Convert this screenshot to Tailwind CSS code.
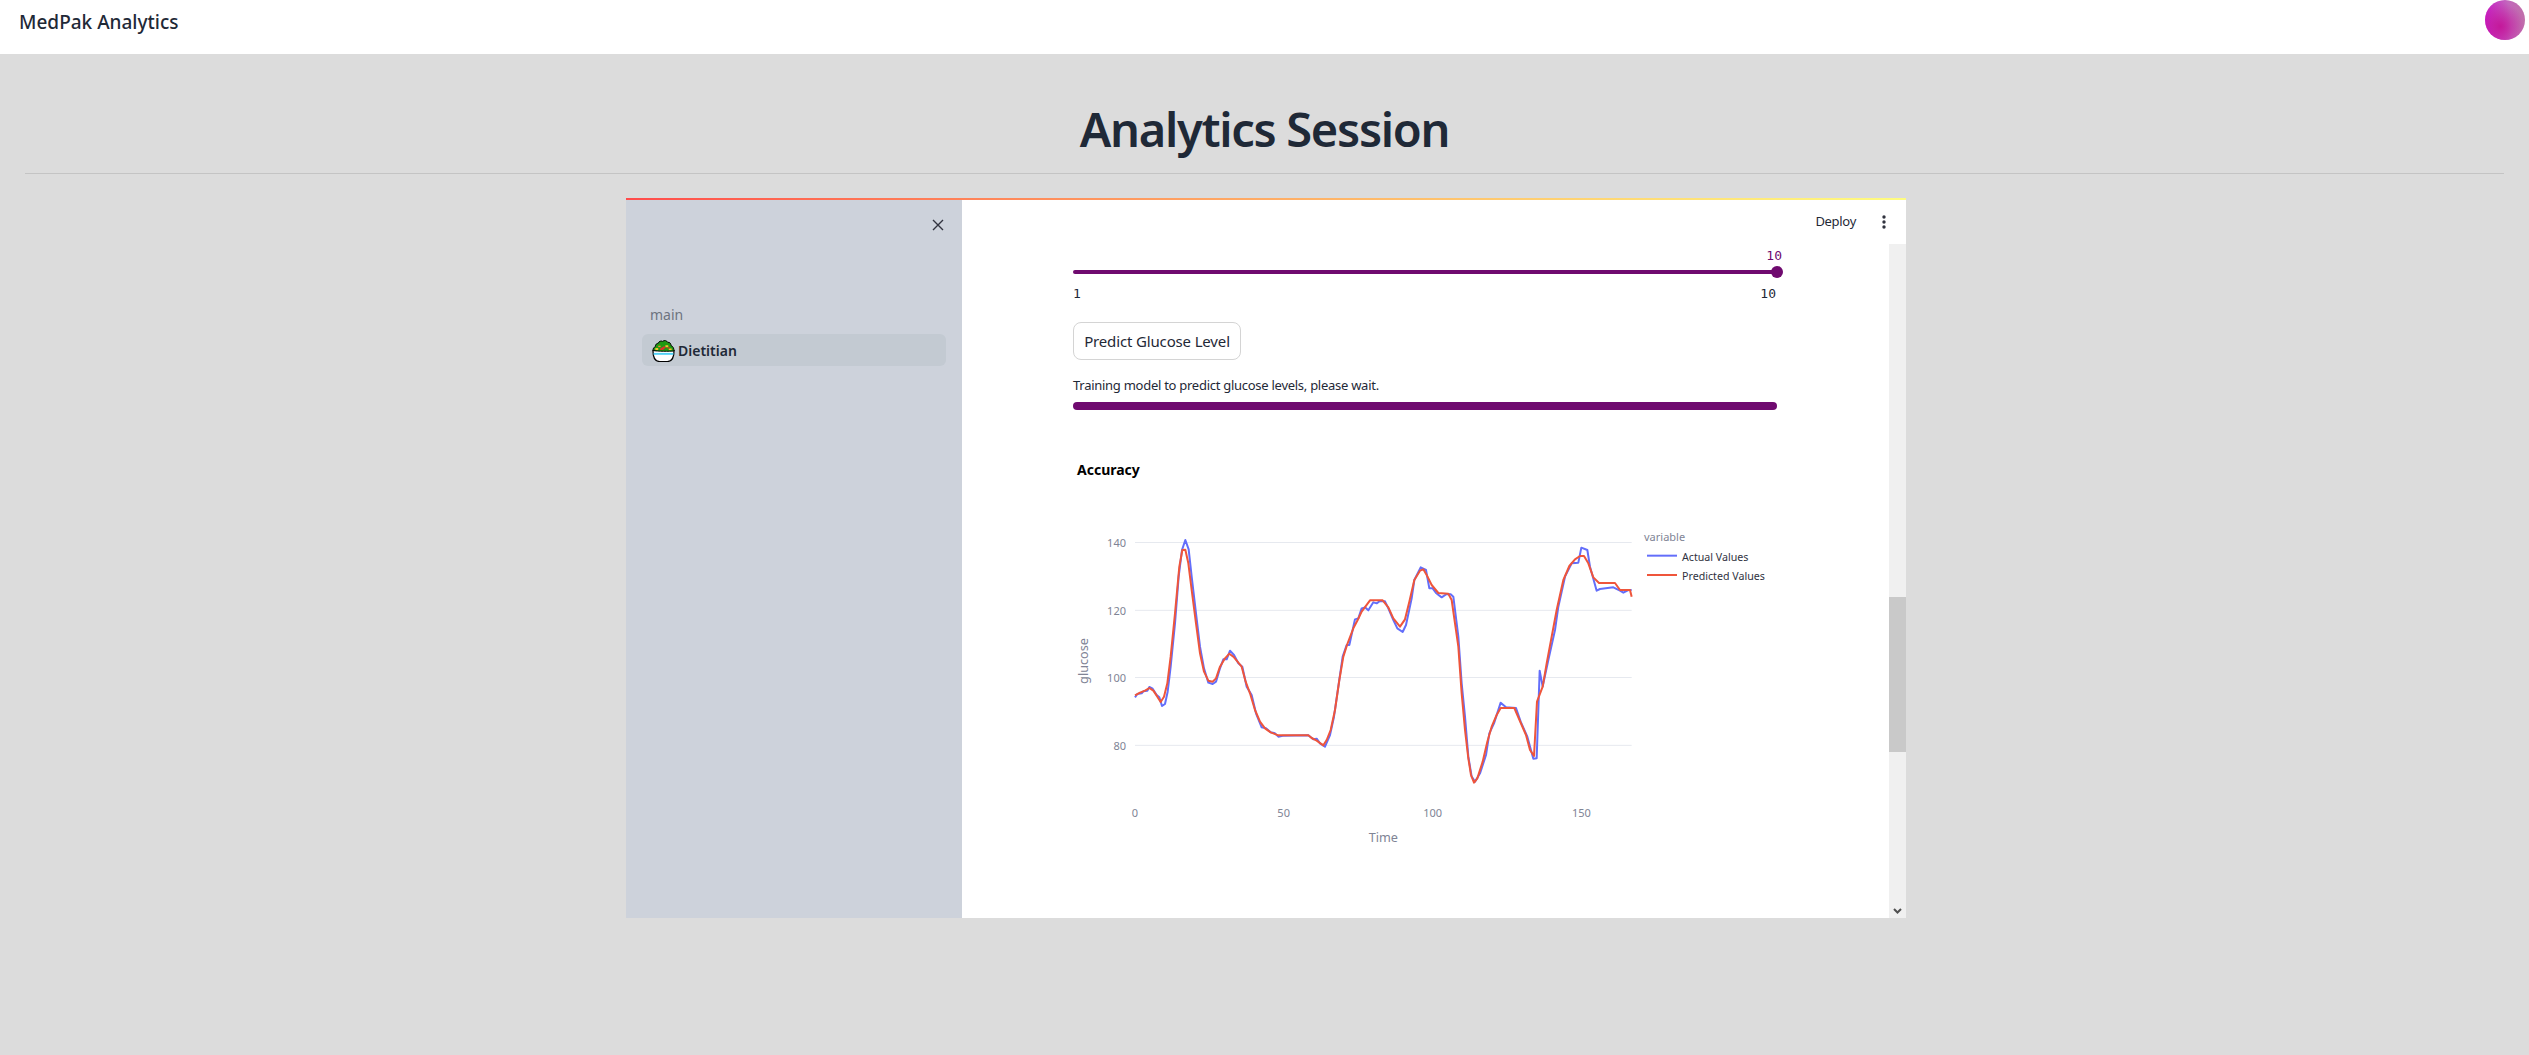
<!DOCTYPE html>
<html lang="en">
<head>
  <meta charset="UTF-8">
  <meta name="viewport" content="width=device-width, initial-scale=1.0">
  <title>MedPak Analytics</title>
  <script src="https://cdn.jsdelivr.net/npm/@tailwindcss/browser@4"></script>
</head>
<body class="bg-[#dcdcdc] font-['Noto_Sans',sans-serif] text-[#1f2937] h-[1055px] overflow-hidden">
  <!-- top nav -->
  <header class="h-[54px] bg-white flex items-start justify-between pl-[19px] pr-[4px]">
    <span class="text-[19px] leading-[44px] font-medium">MedPak Analytics</span>
    <svg class="w-10 h-10" viewBox="0 0 40 40">
      <defs>
        <radialGradient id="av1" cx="0.38" cy="0.66" r="0.6">
          <stop offset="0" stop-color="#c4189a"/>
          <stop offset="1" stop-color="#c4189a" stop-opacity="0"/>
        </radialGradient>
        <linearGradient id="av0" x1="0" y1="0.3" x2="1" y2="0.2">
          <stop offset="0" stop-color="#c81cc8"/>
          <stop offset="0.6" stop-color="#c268bc"/>
          <stop offset="1" stop-color="#c070a8"/>
        </linearGradient>
      </defs>
      <circle cx="20" cy="20" r="20" fill="url(#av0)"/>
      <circle cx="20" cy="20" r="20" fill="url(#av1)"/>
    </svg>
  </header>

  <h1 class="text-[47px] leading-[64px] font-semibold tracking-[-1.3px] text-center mt-[43px]">Analytics Session</h1>
  <hr class="mx-[25px] mt-[12px] border-[#c4c4c4]">

  <!-- embedded app -->
  <div class="w-[1280px] h-[720px] ml-[626px] mt-[24px] flex flex-col bg-white">
    <div class="h-[2px] bg-linear-to-r from-[#ff4b4b] to-[#fffd80]"></div>
    <div class="flex-1 flex min-h-0">
      <aside class="w-[336px] bg-[#cdd2db] px-[16px]">
        <div class="flex justify-end pr-[2px] pt-[19px]">
          <svg class="w-[12px] h-[12px]" viewBox="0 0 12 12" fill="none" stroke="#31333f" stroke-width="1.4"><path d="M1 1l10 10M11 1L1 11"/></svg>
        </div>
        <p class="mt-[74px] ml-[8px] text-[14px] leading-[20px] text-[#6d7480]">main</p>
        <div class="mt-[9px] h-[32px] bg-[#c3cad2] rounded-md flex items-center pl-[10px] gap-[3px]">
          <svg class="w-[23px] h-[23px]" viewBox="0 0 24 24">
            <path d="M1 12Q1 23.500 8 23.500H16Q23 23.500 23 12z" fill="#fff" stroke="#000" stroke-width="1.300"/>
            <path d="M1.700 14.500h20.600v2H1.700z" fill="#4fd0f5"/>
            <path d="M1 12C1 10 2 8.500 3.500 8 3.500 5.500 5 4.500 6.500 4.500 7 2.500 9.500 1.500 11 2.500 13 .8 15.500 1.800 16.500 3.500 18.500 3 20 5 19.800 6.800 22 7.500 23 10 23 12.500 18 13 6 13 1 12z" fill="#1f9a12" stroke="#000" stroke-width="1"/>
            <path d="M3.500 9.500h3v2h-3zM14 6.500h3v2h-3zM17.500 10h3v1.500h-3z" fill="#f6c02c"/>
            <path d="M8.500 10l4-2.500 2 1-3 3h-3zM16 8.500h2.500v1.500H16z" fill="#d8342c"/>
            <path d="M6.500 7h2.500v1.500H6.500z" fill="#f08a2c"/>
          </svg>
          <span class="text-[14px] font-semibold">Dietitian</span>
        </div>
      </aside>
      <main class="flex-1 flex flex-col min-w-0">
        <div class="h-[44px] flex items-center justify-end pr-[20px] gap-[26px] shrink-0">
          <span class="text-[13px] tracking-[-0.3px]">Deploy</span>
          <svg class="w-[4px] h-[14px]" viewBox="0 0 4 14" fill="#31333f"><circle cx="2" cy="2" r="1.700"/><circle cx="2" cy="7" r="1.700"/><circle cx="2" cy="12" r="1.700"/></svg>
        </div>
        <div class="flex-1 flex min-h-0">
          <div class="flex-1 pl-[111px] min-w-0 overflow-hidden">
            <div class="w-[704px]">
              <div class="h-[20px] flex justify-end -mr-[5px] font-['DejaVu_Sans_Mono',monospace] text-[13px] leading-[20px] text-[#6f0a6f] mt-[2px]">10</div>
              <div class="relative h-1 mt-[4px] bg-[#6f0a6f] rounded-full">
                <div class="absolute right-[-6px] top-[-4px] w-3 h-3 rounded-full bg-[#6f0a6f]"></div>
              </div>
              <div class="flex justify-between mt-[12px] pr-[1px] font-['DejaVu_Sans_Mono',monospace] text-[13px] leading-[16px]"><span>1</span><span>10</span></div>
              <button class="block mt-[20px] w-[168px] h-[38px] rounded-lg border border-[#d4d4d4] bg-white text-[15px] tracking-[-0.15px]">Predict Glucose Level</button>
              <p class="mt-[15px] text-[13px] leading-[20px] tracking-[-0.27px]">Training model to predict glucose levels, please wait.</p>
              <div class="mt-[7px] h-2 rounded-full bg-[#6f0a6f]"></div>
              <p class="mt-[50px] ml-[4px] text-[14px] leading-[20px] font-bold text-black">Accuracy</p>
              <svg class="block mt-[20px] -ml-[13px] w-[720px] h-[360px]" viewBox="0 0 2160 1080" fill="none">
                <g stroke="#e6e9ef" stroke-width="3">
                  <path d="M225 127.500H1715M225 331H1715M225 532.500H1715M225 736H1715"/>
                </g>
                <polyline stroke="#636efa" stroke-width="6" stroke-linejoin="round" points="225,592 232,582 245,580 250,574 262,572 268,561 278,566 290,585 298,592 306,618 315,612 323,575 332,500 345,370 356,230 366,150 376,120 386,148 395,230 408,340 420,440 432,505 445,548 458,552 468,545 480,505 490,478 500,478 510,452 522,465 535,490 547,500 560,560 575,585 588,640 605,682 618,685 632,697 645,700 655,710 668,707 745,706 760,718 770,716 780,730 795,740 810,705 822,650 835,560 848,470 860,435 868,435 885,358 895,355 905,325 915,322 925,331 940,307 950,310 960,303 975,304 985,325 1000,360 1012,385 1028,396 1038,375 1055,295 1063,240 1082,202 1098,210 1108,265 1118,265 1128,279 1145,292 1160,282 1172,283 1180,290 1195,410 1205,550 1215,650 1225,770 1235,830 1245,845 1260,820 1278,765 1288,700 1302,670 1322,608 1338,622 1368,624 1382,665 1402,710 1420,776 1430,775 1439,512 1448,560 1465,480 1485,390 1495,320 1515,230 1535,190 1555,188 1564,143 1582,150 1590,200 1610,272 1620,267 1660,262 1680,272 1690,278 1705,270 1715,270"/>
                <polyline stroke="#ef553b" stroke-width="6" stroke-linejoin="round" points="225,586 240,578 255,572 268,564 280,572 292,590 302,606 312,590 322,550 332,470 345,340 358,200 367,150 376,149 385,190 395,270 408,370 420,460 432,515 445,542 458,545 468,535 480,500 495,475 508,461 522,472 545,500 557,545 570,580 585,630 600,665 615,685 632,697 655,706 745,706 755,714 770,722 790,736 800,720 812,690 825,630 838,540 850,470 862,432 880,385 893,360 905,335 930,301 968,301 985,322 1000,355 1020,380 1035,358 1048,305 1063,240 1080,212 1090,208 1100,225 1115,255 1135,279 1165,281 1175,300 1185,370 1195,440 1205,580 1215,690 1225,775 1233,825 1242,848 1252,835 1268,785 1282,725 1295,680 1310,645 1322,624 1363,624 1372,645 1385,675 1398,705 1410,750 1422,768 1431,605 1448,560 1460,490 1475,410 1490,330 1510,240 1528,198 1545,178 1560,168 1572,168 1585,190 1600,232 1617,249 1665,249 1680,270 1710,270 1715,290"/>
                <g class="fill-[#808495] text-[33px]" text-anchor="end">
                  <text x="198" y="140">140</text>
                  <text x="198" y="344">120</text>
                  <text x="198" y="545">100</text>
                  <text x="198" y="749">80</text>
                </g>
                <g class="fill-[#808495] text-[33px]" text-anchor="middle">
                  <text x="225" y="951">0</text>
                  <text x="671" y="951">50</text>
                  <text x="1118" y="951">100</text>
                  <text x="1564" y="951">150</text>
                </g>
                <text x="970" y="1025" text-anchor="middle" class="fill-[#808495] text-[38px]">Time</text>
                <text transform="translate(84 483) rotate(-90)" text-anchor="middle" class="fill-[#808495] text-[38px]">glucose</text>
                <text x="1752" y="124" class="fill-[#808495] text-[33px]">variable</text>
                <path d="M1761 167h90" stroke="#636efa" stroke-width="6"/>
                <path d="M1761 225h90" stroke="#ef553b" stroke-width="6"/>
                <text x="1866" y="182" class="fill-[#31333f] text-[32px]">Actual Values</text>
                <text x="1866" y="239" class="fill-[#31333f] text-[32px]">Predicted Values</text>
              </svg>
            </div>
          </div>
          <!-- scrollbar -->
          <div class="w-[17px] bg-[#f0f0f0] relative shrink-0">
            <div class="absolute left-0 right-0 top-[353px] h-[155px] bg-[#c9c9c9]"></div>
            <svg class="absolute left-[4px] bottom-[4px] w-[9px] h-[6px]" viewBox="0 0 9 6" fill="none" stroke="#505050" stroke-width="2"><path d="M1 1l3.500 3.500L8 1"/></svg>
          </div>
        </div>
      </main>
    </div>
  </div>
</body>
</html>
